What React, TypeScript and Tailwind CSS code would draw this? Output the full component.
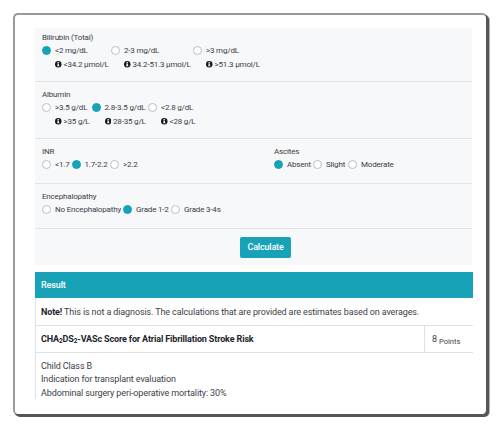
type Option = { label: string; width: string; on?: boolean; info?: string };

function InfoIcon() {
  return (
    <svg viewBox="0 0 14 14" className="mr-[2px] h-[6.5px] w-[6.5px] shrink-0">
      <circle cx="7" cy="7" r="7" fill="#17191b" />
      <path d="M5.6 2.2h2.8v2H5.6zM4.8 5.6h3.6v4h1v1.8H4.6V9.6h1V7.2h-.8z" fill="#fff" />
    </svg>
  );
}

function Choice({ option }: { option: Option }) {
  return (
    <div className={`flex shrink-0 ${option.width}`}>
      <span
        className={`mt-[2px] mr-[4px] h-[9px] w-[9px] shrink-0 rounded-full border ${
          option.on ? "border-[#17a2b8] bg-[#17a2b8]" : "border-[#b9bfc5] bg-white"
        }`}
      />
      <div className="whitespace-nowrap">
        <div className="h-[14px] leading-[14px]">{option.label}</div>
        {option.info && (
          <div className="flex h-[13px] items-center leading-[13px]">
            <InfoIcon />
            {option.info}
          </div>
        )}
      </div>
    </div>
  );
}

function Group({ title, options, className = "" }: { title: string; options: Option[]; className?: string }) {
  return (
    <div className={className}>
      <div className="h-[13px] leading-[13px]">{title}</div>
      <div className="flex">
        {options.map((option) => (
          <Choice key={option.label} option={option} />
        ))}
      </div>
    </div>
  );
}

const bilirubin: Option[] = [
  { label: "<2 mg/dL", info: "<34.2 µmol/L", width: "w-[69px]", on: true },
  { label: "2-3 mg/dL", info: "34.2-51.3 µmol/L", width: "w-[82px]" },
  { label: ">3 mg/dL", info: ">51.3 µmol/L", width: "w-[70px]" },
];
const albumin: Option[] = [
  { label: ">3.5 g/dL", info: ">35 g/L", width: "w-[49.5px]" },
  { label: "2.8-3.5 g/dL", info: "28-35 g/L", width: "w-[56.5px]", on: true },
  { label: "<2.8 g/dL", info: "<28 g/L", width: "w-[60px]" },
];
const inr: Option[] = [
  { label: "<1.7", width: "w-[29.5px]" },
  { label: "1.7-2.2", width: "w-[38.5px]", on: true },
  { label: ">2.2", width: "w-[40px]" },
];
const ascites: Option[] = [
  { label: "Absent", width: "w-[39px]", on: true },
  { label: "Slight", width: "w-[35px]" },
  { label: "Moderate", width: "w-[50px]" },
];
const encephalopathy: Option[] = [
  { label: "No Encephalopathy", width: "w-[81px]" },
  { label: "Grade 1-2", width: "w-[48px]", on: true },
  { label: "Grade 3-4s", width: "w-[55px]" },
];

export default function App() {
  return (
    <div className="h-[428px] w-[500px] overflow-hidden bg-white pt-[13px] pl-[13px] font-[Roboto,sans-serif] text-[#3c4146]">
      <div className="h-[402px] w-[474px] rounded-[5px] border-t-2 border-r border-b border-l-2 border-[#9a9a9a] border-r-[#555] border-b-[#555] bg-white pt-[13px] pl-[20px] shadow-[1px_1px_0_#555,2px_2px_0_#555,3px_2px_0_#b5b5b5]">
        <div className="w-[438px]">
          <div className="h-[237px] w-[437px] bg-[#f6f8fa] text-[8px] tracking-[-0.18px]">
            <div className="h-[54px] border-b border-[#e1e4e8] pt-[3px] pl-[7px]">
              <Group title="Bilirubin (Total)" options={bilirubin} />
            </div>
            <div className="h-[57px] border-b border-[#e1e4e8] pt-[6px] pl-[7px]">
              <Group title="Albumin" options={albumin} />
            </div>
            <div className="flex h-[45px] border-b border-[#e1e4e8] pt-[6px] pl-[7px]">
              <Group title="INR" options={inr} className="w-[232px]" />
              <Group title="Ascites" options={ascites} />
            </div>
            <div className="h-[45px] border-b border-[#e1e4e8] pt-[6px] pl-[7px]">
              <Group title="Encephalopathy" options={encephalopathy} />
            </div>
            <div className="flex justify-center pt-[8px] pl-[24px]">
              <button className="h-[21px] w-[51px] rounded-[2px] bg-[#17a2b8] text-[9px] font-medium text-white">Calculate</button>
            </div>
          </div>
          <div className="mt-[7px] h-[127px] text-[9px] tracking-[-0.12px]">
            <div className="h-[26px] bg-[#17a2b8] pl-[6px] leading-[26px] font-medium text-white">Result</div>
            <div className="h-[101px] border-l border-[#dee2e6]">
              <div className="h-[28px] border-b border-[#dee2e6] pl-[5px] leading-[28px] whitespace-nowrap">
                <b className="font-bold text-[#212529]">Note!</b> This is not a diagnosis. The calculations that are provided are estimates based on averages.
              </div>
              <div className="flex h-[27px] border-b border-[#dee2e6]">
                <div className="w-[389px] border-r border-[#dee2e6] pl-[5px] leading-[26px] font-bold tracking-[-0.14px] whitespace-nowrap text-[#212529]">
                  CHA<sub className="bottom-[-1px] text-[6.5px] leading-none">2</sub>DS<sub className="bottom-[-1px] text-[6.5px] leading-none">2</sub>-VASc Score for Atrial Fibrillation Stroke Risk
                </div>
                <div className="pl-[7px] leading-[26px]">
                  8 <sub className="bottom-[-2px] text-[7.5px] leading-none tracking-normal">Points</sub>
                </div>
              </div>
              <div className="pt-[7px] pl-[5px] leading-[13.3px]">
                <div>Child Class B</div>
                <div>Indication for transplant evaluation</div>
                <div>Abdominal surgery peri-operative mortality: 30%</div>
              </div>
            </div>
          </div>
        </div>
      </div>
    </div>
  );
}
